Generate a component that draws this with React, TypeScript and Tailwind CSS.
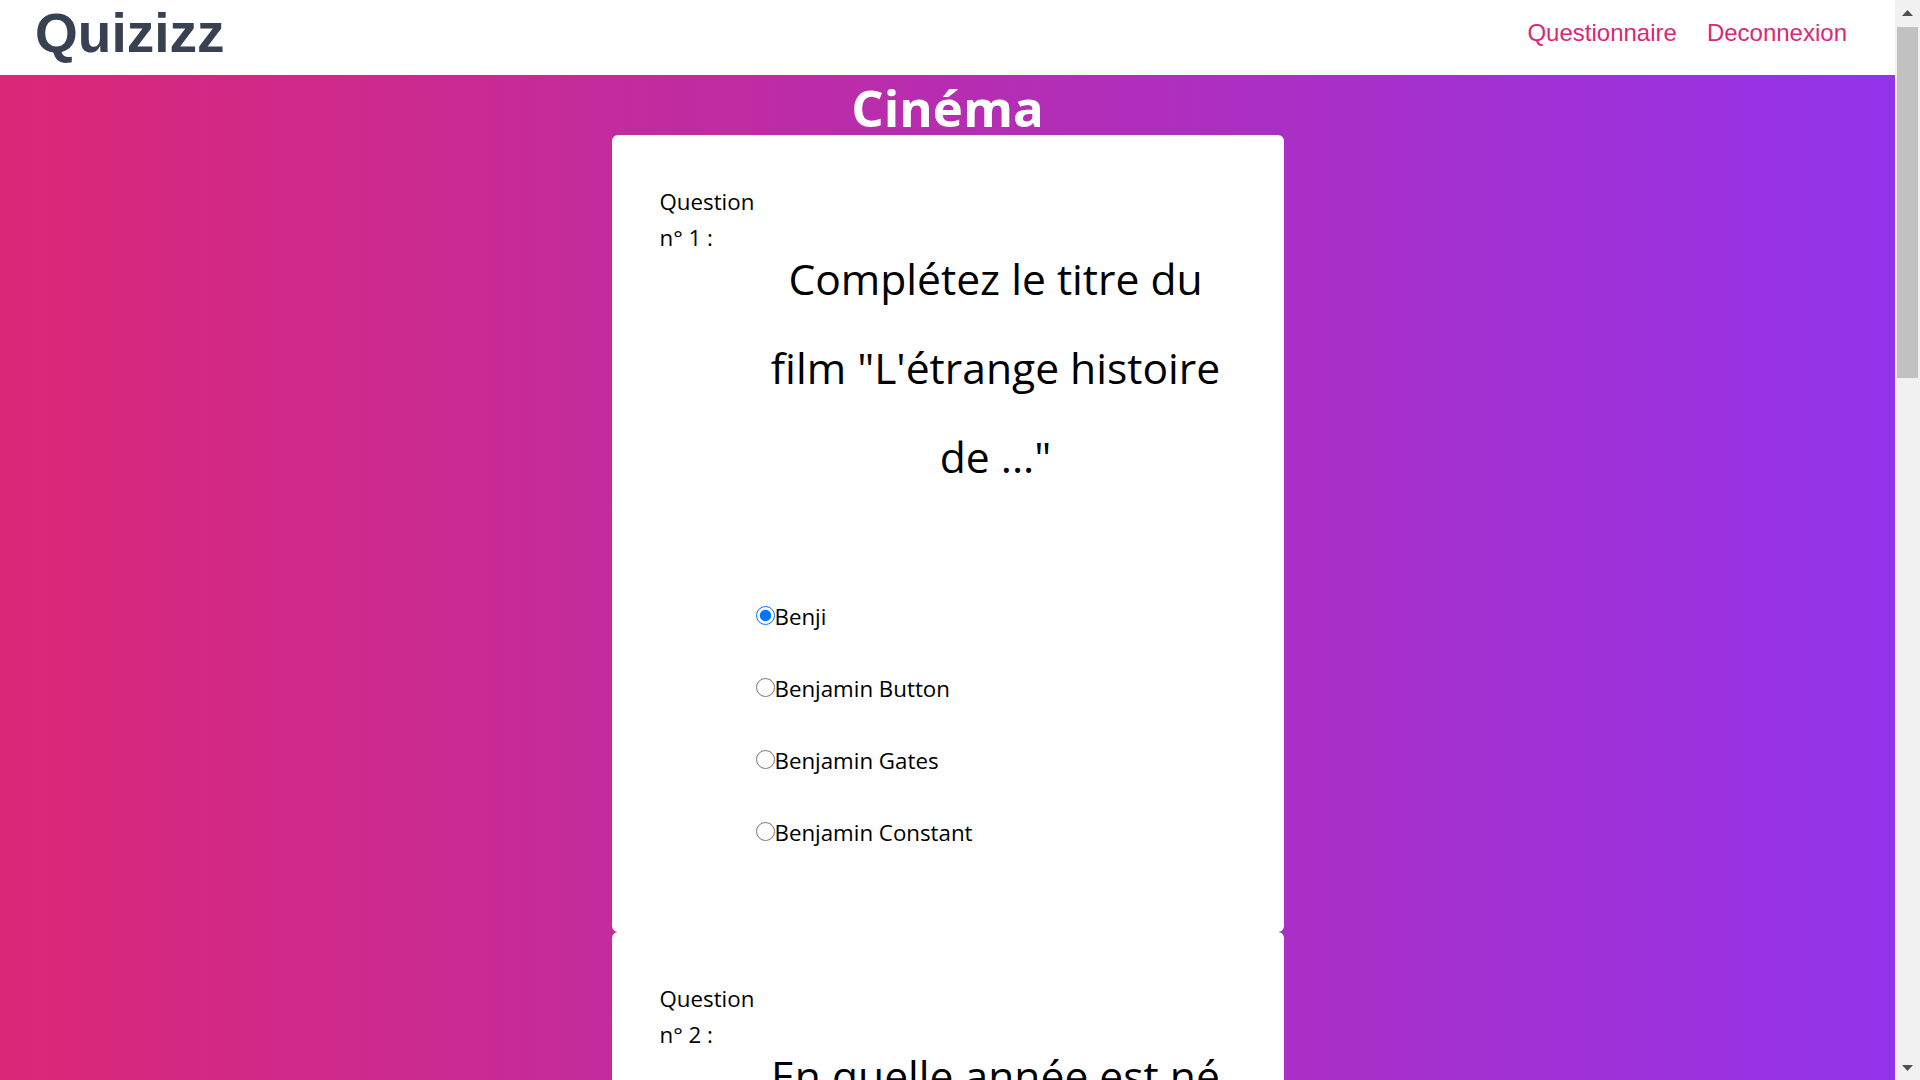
import React from "react";

type Q = { n: number; text: string; answers: string[]; checked?: number };

const questions: Q[] = [
  {
    n: 1,
    text: 'Complétez le titre du film "L\'étrange histoire de ..."',
    answers: ["Benji", "Benjamin Button", "Benjamin Gates", "Benjamin Constant"],
    checked: 0,
  },
  {
    n: 2,
    text: "En quelle année est né le cinéma ?",
    answers: ["1895", "1905", "1885", "1915"],
  },
  {
    n: 3,
    text: 'Qui a réalisé le film "Le Voyage dans la Lune" ?',
    answers: ["Georges Méliès", "Louis Lumière", "Charlie Chaplin", "Jean Renoir"],
  },
  {
    n: 4,
    text: "Quel acteur incarne Jack Sparrow dans Pirates des Caraïbes ?",
    answers: ["Johnny Depp", "Orlando Bloom", "Brad Pitt", "Tom Cruise"],
  },
];

function QuestionCard({ q }: { q: Q }) {
  return (
    <div className="mx-auto w-[672px] rounded-md bg-white pl-12 pr-12 pt-[49px] pb-[80.5px] text-black">
      <div className="flex">
        <div className="w-[96px] shrink-0 text-[22.3px] leading-[36px]">
          Question n° {q.n} :
        </div>
        <div className="min-w-0 flex-1">
          <h2 className="mt-[50px] text-center text-[42.6px] font-normal leading-[89px]">{q.text}</h2>
          <div className="mt-[98px] flex flex-col gap-[36px]">
            {q.answers.map((a, i) => (
              <label key={a} className="block text-[22.3px] leading-[36px]">
                <input
                  type="radio"
                  name={`q${q.n}`}
                  defaultChecked={q.checked === i}
                  className="h-[19px] w-[19px]"
                />
                {a}
              </label>
            ))}
          </div>
        </div>
      </div>
    </div>
  );
}

function Arrow({ down }: { down?: boolean }) {
  return (
    <div className="flex h-[25px] items-center justify-center">
      <svg width="11" height="6" viewBox="0 0 11 6" className={down ? "rotate-180" : ""}>
        <path d="M0 6 L5.5 0 L11 6 Z" fill="#505050" />
      </svg>
    </div>
  );
}

export default function App() {
  return (
    <div className="flex h-screen font-['Open_Sans',sans-serif]">
      <div className="h-full flex-1 overflow-y-auto">
        <header className="flex h-[75px] items-start justify-between bg-white font-['Liberation_Sans',Arial,sans-serif]">
          <div className="pl-[35px] pt-[6px] text-[55px] font-bold leading-none text-[#374151]">Quizizz</div>
          <nav className="flex gap-[30px] pr-[48px] pt-[21px] text-[24px] leading-none text-[#db2777]">
            <a href="#">Questionnaire</a>
            <a href="#">Deconnexion</a>
          </nav>
        </header>
        <main className="bg-[linear-gradient(to_right,#db2777,#9333ea)]">
          <h1 className="h-[60px] text-center text-[51px] font-bold leading-[64px] text-white">Cinéma</h1>
          <div className="flex flex-col">
            {questions.map((q) => (
              <QuestionCard key={q.n} q={q} />
            ))}
          </div>
        </main>
      </div>
      <div className="flex w-[25px] shrink-0 flex-col bg-[#f1f1f1]">
        <Arrow />
        <div className="mx-[2px] mt-[2px] h-[351px] bg-[#c1c1c1]" />
        <div className="flex-1" />
        <Arrow down />
      </div>
    </div>
  );
}
